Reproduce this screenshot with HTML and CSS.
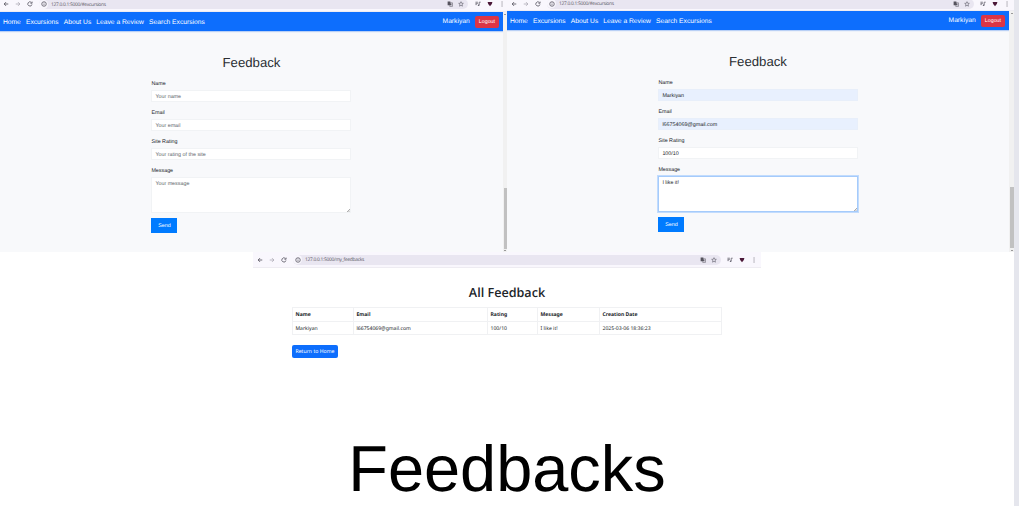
FILE: index.html
```html
<!DOCTYPE html>
<html lang="en">
<head>
<meta charset="utf-8">
<title>Feedbacks</title>
<link rel="stylesheet" href="styles.css">
</head>
<body>
<svg width="0" height="0" class="defs">
  <symbol id="back" viewBox="0 0 8 8"><path d="M7 4H1.5M4 1.5L1.5 4L4 6.5" fill="none" stroke="currentColor" stroke-width="1.2"/></symbol>
  <symbol id="fwd" viewBox="0 0 8 8"><path d="M1 4H6.5M4 1.5L6.5 4L4 6.5" fill="none" stroke="currentColor" stroke-width="1"/></symbol>
  <symbol id="reload" viewBox="0 0 8 8"><path d="M6.6 4.6A2.8 2.8 0 1 1 6 2.1M6.8 .8V3H4.6" fill="none" stroke="currentColor" stroke-width="1.1"/></symbol>
  <symbol id="info" viewBox="0 0 8 8"><circle cx="4" cy="4" r="3" fill="none" stroke="currentColor" stroke-width="1.1"/><path d="M4 3.6V5.6M4 2.2V3" stroke="currentColor" stroke-width=".9"/></symbol>
  <symbol id="translate" viewBox="0 0 8 8"><path d="M.8 .8H4.4L5.6 5.6H.8Z" fill="#55535d"/><path d="M4.6 2.4H7.3V7.2H3.6L3.2 5.8" fill="none" stroke="#66646e" stroke-width=".8"/><path d="M5.4 4H6.7M6 4.2L5.4 6" stroke="#66646e" stroke-width=".6"/></symbol>
  <symbol id="star" viewBox="0 0 8 8"><path d="M4 .9L4.9 3L7.1 3.2L5.4 4.7L5.9 6.9L4 5.7L2.1 6.9L2.6 4.7L.9 3.2L3.1 3Z" fill="none" stroke="currentColor" stroke-width=".8"/></symbol>
  <symbol id="media" viewBox="0 0 8 8"><path d="M.6 1.6H3.8M.6 3.2H3.8M.6 4.8H2.4M5.6 5.6V1.6H7.6" fill="none" stroke="currentColor" stroke-width="1"/><circle cx="4.8" cy="5.6" r="1.1" fill="currentColor"/></symbol>
  <symbol id="shield" viewBox="0 0 8 8"><path d="M.8 1.4H7.2L6.4 4L4 7L1.6 4Z" fill="#4b1838"/></symbol>
  <symbol id="dots" viewBox="0 0 8 8"><path d="M3.5 .8h1.1v1.2h-1.1zM3.5 3.4h1.1v1.2h-1.1zM3.5 6h1.1v1.2h-1.1z" fill="currentColor"/></symbol>
</svg>
<div class="slide">
  <main class="board">
    <div class="pair">
      <section class="window first">
        <div class="chrome">
          <svg class="ic"><use href="#back"/></svg><svg class="ic dim"><use href="#fwd"/></svg><svg class="ic"><use href="#reload"/></svg>
          <div class="omnibox"><span class="site"><svg class="ic"><use href="#info"/></svg></span><span class="url">127.0.0.1:5000/#excursions</span><svg class="ic tr"><use href="#translate"/></svg><svg class="ic"><use href="#star"/></svg></div>
          <svg class="ic"><use href="#media"/></svg><svg class="ic"><use href="#shield"/></svg><svg class="ic"><use href="#dots"/></svg>
        </div>
        <div class="viewport">
          <div class="page">
            <nav class="nav"><a>Home</a><a>Excursions</a><a>About Us</a><a>Leave a Review</a><a>Search Excursions</a><span class="user">Markiyan</span><span class="logout">Logout</span></nav>
            <h2 class="title">Feedback</h2>
            <form class="form">
              <label>Name</label><div class="field hint">Your name</div>
              <label>Email</label><div class="field hint">Your email</div>
              <label>Site Rating</label><div class="field hint">Your rating of the site</div>
              <label>Message</label><div class="field area hint">Your message<svg class="grip" viewBox="0 0 4 4"><path d="M0 4L4 0M2 4L4 2" stroke="#777" stroke-width=".8"/></svg></div>
              <div class="send">Send</div>
            </form>
          </div>
          <div class="scroll"><span class="arrow up"></span><i class="thumb"></i><span class="arrow down"></span></div>
        </div>
      </section>
      <section class="window second">
        <div class="chrome">
          <svg class="ic"><use href="#back"/></svg><svg class="ic dim"><use href="#fwd"/></svg><svg class="ic"><use href="#reload"/></svg>
          <div class="omnibox"><span class="site"><svg class="ic"><use href="#info"/></svg></span><span class="url">127.0.0.1:5000/#excursions</span><svg class="ic tr"><use href="#translate"/></svg><svg class="ic"><use href="#star"/></svg></div>
          <svg class="ic"><use href="#media"/></svg><svg class="ic"><use href="#shield"/></svg><svg class="ic"><use href="#dots"/></svg>
        </div>
        <div class="viewport">
          <div class="page">
            <nav class="nav"><a>Home</a><a>Excursions</a><a>About Us</a><a>Leave a Review</a><a>Search Excursions</a><span class="user">Markiyan</span><span class="logout">Logout</span></nav>
            <h2 class="title">Feedback</h2>
            <form class="form">
              <label>Name</label><div class="field auto">Markiyan</div>
              <label>Email</label><div class="field auto">l66754069@gmail.com</div>
              <label>Site Rating</label><div class="field">100/10</div>
              <label>Message</label><div class="field area focus">I like it!<svg class="grip" viewBox="0 0 4 4"><path d="M0 4L4 0M2 4L4 2" stroke="#777" stroke-width=".8"/></svg></div>
              <div class="send">Send</div>
            </form>
          </div>
          <div class="scroll"><span class="arrow up"></span><i class="thumb"></i><span class="arrow down"></span></div>
        </div>
      </section>
    </div>
    <section class="window list">
      <div class="chrome">
        <svg class="ic"><use href="#back"/></svg><svg class="ic dim"><use href="#fwd"/></svg><svg class="ic"><use href="#reload"/></svg>
        <div class="omnibox"><span class="site"><svg class="ic"><use href="#info"/></svg></span><span class="url">127.0.0.1:5000/my_feedbacks</span><svg class="ic tr"><use href="#translate"/></svg><svg class="ic"><use href="#star"/></svg></div>
        <svg class="ic"><use href="#media"/></svg><svg class="ic"><use href="#shield"/></svg><svg class="ic"><use href="#dots"/></svg>
      </div>
      <h2 class="list-title">All Feedback</h2>
      <div class="table">
        <b>Name</b><b>Email</b><b>Rating</b><b>Message</b><b>Creation Date</b>
        <span>Markiyan</span><span>l66754069@gmail.com</span><span>100/10</span><span>I like it!</span><span>2025-03-06 18:36:23</span>
      </div>
      <div class="home">Return to Home</div>
    </section>
    <h1 class="caption">Feedbacks</h1>
  </main>
  <div class="edge"></div>
</div>
</body>
</html>
```
FILE: styles.css
```css
* { box-sizing: border-box; }
body { margin: 0; background: #fff; font-family: "Liberation Sans", Arial, sans-serif; text-rendering: geometricPrecision; }
.defs { position: absolute; }
.slide { display: flex; width: 1019px; height: 506px; overflow: hidden; }
.board { width: 1014px; }
.edge { width: 5px; background: #e5e6ed; }
.pair { display: flex; height: 252px; }
.window { width: 507px; overflow: hidden; white-space: nowrap; }
.pair .window { display: flex; flex-direction: column; height: 252px; }

.chrome { display: flex; align-items: center; flex: none; height: 15px; padding: 0 5px 0 3px; background: #f9f7fd; color: #5d5b67; border-bottom: 1px solid #eeecf2; }
.ic { width: 6px; height: 6px; flex: none; margin-right: 6px; }
.dim { color: #a5a3ae; }
.omnibox { display: flex; align-items: center; flex: 1; height: 10px; margin: 0 6.5px 0 0; padding-right: 4px; border-radius: 5px; background: #e9e6f1; }
.omnibox .ic { margin: 0; }
.omnibox .tr { margin-right: 5px; }
.site { display: grid; place-items: center; width: 9px; height: 9px; margin-right: 3px; border-radius: 50%; background: #f9f7fd; }
.url { flex: 1; padding-top: 1px; font: 4.9px "Open Sans", sans-serif; color: #5b5965; letter-spacing: -.3px; }
.chrome > .ic:nth-last-child(1) { margin: 0 -1px 0 0; }
.first .chrome { height: 12px; padding-bottom: 3px; padding-right: 3.5px; }
.second .chrome { height: 11px; padding: 0 5px 3px 4px; }

.viewport { display: flex; flex: 1; min-height: 0; }
.page { width: 503px; background: #f8f9fb; }
.second .page { width: 502px; }
.nav { display: flex; align-items: center; gap: 5.1px; height: 19px; padding: 0 4px 0 3px; background: #0d6efd; color: #fff; font-size: 6.7px; box-shadow: 0 1px 1px #b9d0f5; }
.nav a { padding-top: 2px; }
.user { margin-left: auto; }
.logout { height: 12px; line-height: 13px; padding: 0 4px; border-radius: 2px; background: #dc3545; font-size: 5.3px; }
.title { margin: 23px 0 0; height: 17px; line-height: 17px; text-align: center; font-size: 13.2px; font-weight: 400; color: #2b2f33; }
.form { display: block; width: 199.4px; margin: 7px 0 0 151.4px; font-size: 5.35px; color: #212529; }
.form label { display: block; height: 12px; line-height: 12px; }
.field { height: 12px; margin-bottom: 5px; padding: 0 3px; line-height: 12.5px; background: #fff; border: 1px solid #f1f3f5; }
.hint { color: #62676c; }
.auto { background: #e8f0fe; border-color: #e8effa; }
.area { position: relative; height: 36px; }
.grip { position: absolute; right: 0; bottom: 0; width: 3px; height: 3px; }
.focus { outline: 1px solid #c2dcfd; border-color: #a5cbfb; }
.send { width: 26px; height: 15px; line-height: 17px; background: #007bff; color: #fff; text-align: center; }
.second .send { line-height: 16px; }
.scroll { display: flex; flex-direction: column; align-items: center; width: 4px; background: #f1f1f1; }
.second .scroll { width: 5px; }
.thumb { width: 3px; height: 61px; margin-top: auto; background: #c1c1c1; }
.second .thumb { width: 4px; }
.arrow { width: 2px; height: 1px; margin: 2px 0 1px; background: #999; }
.first .down { margin: 1px 0; }

.list { width: 508px; height: 170px; margin-left: 253px; background: #fff; font-family: "Noto Sans", "Open Sans", sans-serif; color: #212529; }
.list .chrome { height: 16px; padding: 0 5px 0 4px; }
.list-title { margin: 15px 0 0; height: 20px; text-align: center; font: 600 12.6px/20px "Open Sans", "Noto Sans", sans-serif; }
.table { display: grid; grid-template-columns: 61px 134px 50px 62px 122px; grid-auto-rows: 13.5px; width: 430px; margin: 4px 0 0 39px; border: solid #f0f1f3; border-width: 1px 0 0 1px; font-size: 5.1px; line-height: 14px; }
.table > * { padding-left: 2.5px; border: solid #f0f1f3; border-width: 0 1px 1px 0; }
.home { width: 46px; height: 13px; margin: 10px 0 0 39px; border-radius: 2px; background: #0d6efd; color: #fff; font-size: 5.2px; line-height: 13px; text-align: center; }
.caption { margin: 10px 0 0; font-size: 64.9px; line-height: 74px; font-weight: 400; text-align: center; color: #000; }
```
